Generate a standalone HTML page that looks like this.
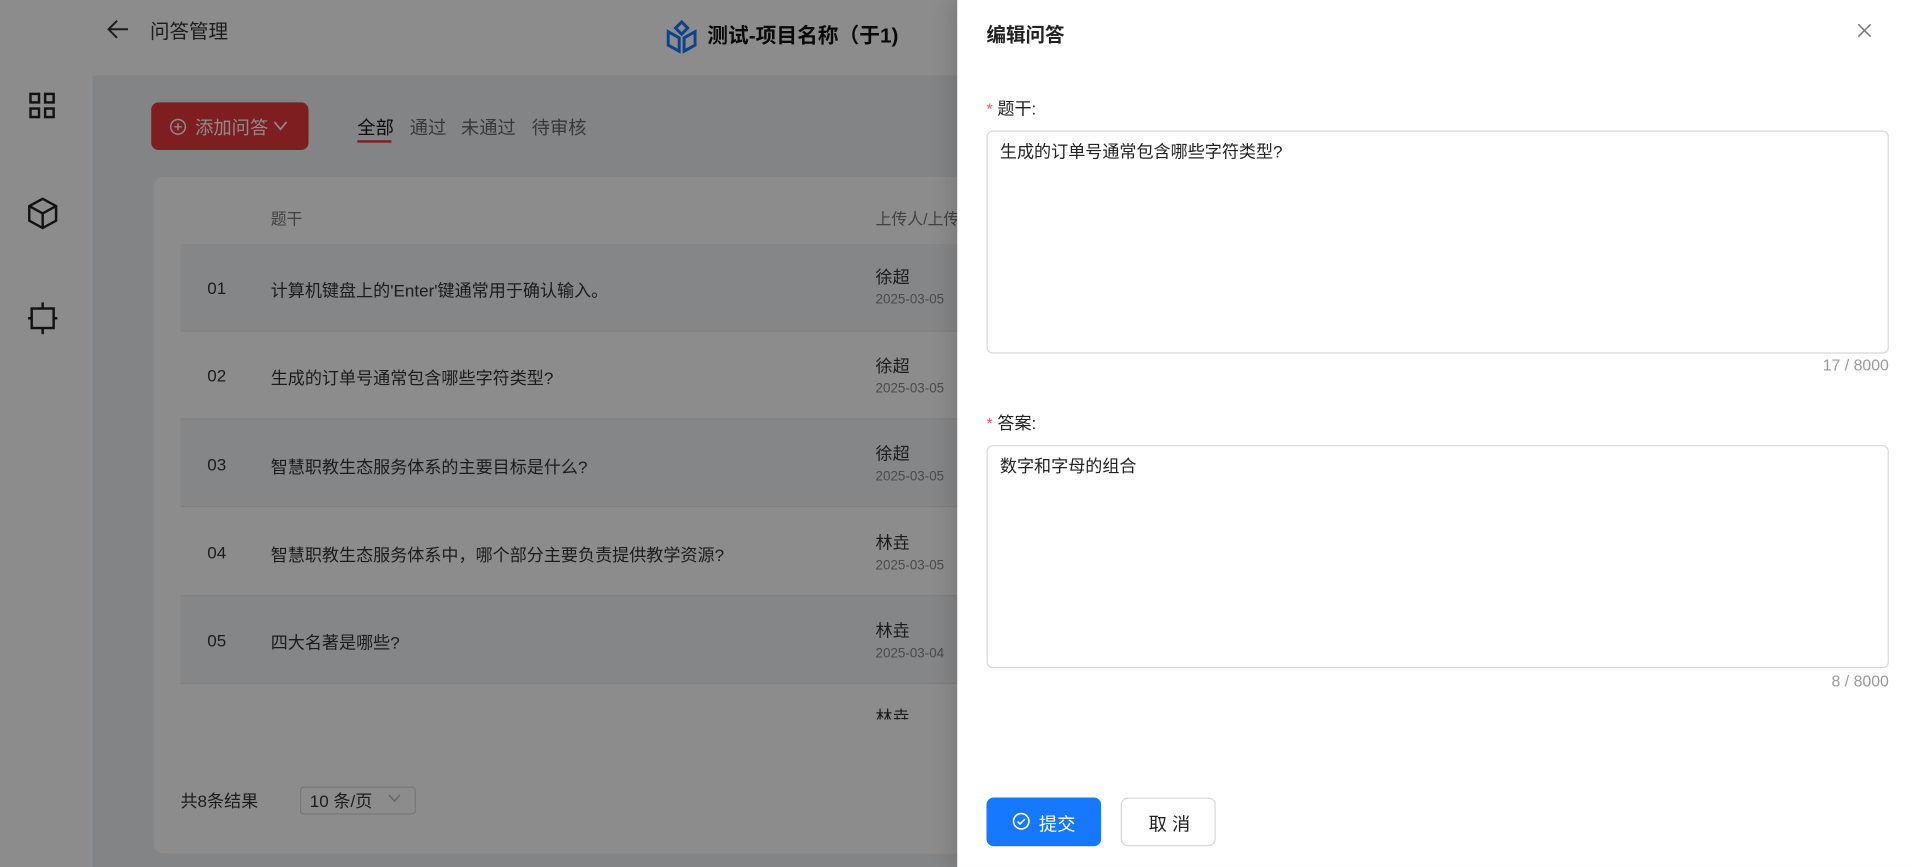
<!DOCTYPE html>
<html><head><meta charset="utf-8"><style>
*{box-sizing:border-box;margin:0;padding:0}
html,body{width:1912px;height:867px;overflow:hidden;background:#fff}
body{font-family:"Liberation Sans","Noto Sans CJK SC",sans-serif;color:#333}
#s{position:absolute;left:0;top:0;width:1568px;height:711px;transform:scale(1.2194);transform-origin:0 0}
.a{position:absolute}
.t{position:absolute;white-space:nowrap}
</style></head><body><div id="s">
<div class="a" style="left:0;top:0;width:76px;height:711px;background:#fff"></div>
<div class="a" style="left:76px;top:0;width:1492px;height:711px;background:#eef0f4"></div>
<div class="a" style="left:76px;top:0;width:1492px;height:62px;background:#fff"></div>
<svg class="a" style="left:86px;top:13px" width="22" height="22" viewBox="0 0 22 22" fill="none" stroke="#333" stroke-width="1.6"><path d="M19 11H3M10 4l-7 7 7 7"/></svg>
<div class="t" style="left:123px;top:12px;font-size:16px;color:#333">问答管理</div>
<svg class="a" style="left:546px;top:16px" width="26" height="28" viewBox="0 0 26 28" fill="none" stroke="#1677ff" stroke-width="2.4"><path d="M13 2l5 5-5 5-5-5z"/><path d="M2 10l9 5v11l-9-5z"/><path d="M24 10l-9 5v11l9-5z"/></svg>
<div class="t" style="left:580px;top:15px;font-size:17px;font-weight:bold;color:#111">测试-项目名称（于1)</div>
<svg class="a" style="left:23px;top:75px" width="24" height="24" viewBox="0 0 24 24" fill="none" stroke="#222" stroke-width="2"><rect x="2" y="2" width="7" height="7"/><rect x="14" y="2" width="7" height="7"/><rect x="2" y="14" width="7" height="7"/><rect x="14" y="14" width="7" height="7"/></svg>
<svg class="a" style="left:22px;top:161px" width="26" height="28" viewBox="0 0 26 28" fill="none" stroke="#222" stroke-width="2"><path d="M13 2l11 6v12l-11 6-11-6V8z"/><path d="M2 8l11 6 11-6M13 14v12"/></svg>
<svg class="a" style="left:22px;top:247px" width="26" height="28" viewBox="0 0 26 28" fill="none" stroke="#222" stroke-width="2"><rect x="4" y="6" width="18" height="16"/><path d="M13 1v5M13 22v5M1 14h3M22 14h3"/></svg>
<div class="a" style="left:124px;top:84px;width:129px;height:39px;background:#e8383d;border-radius:6px"></div>
<svg class="a" style="left:139px;top:97px" width="14" height="14" viewBox="0 0 14 14" fill="none" stroke="#fff" stroke-width="1.2"><circle cx="7" cy="7" r="6"/><path d="M7 4v6M4 7h6"/></svg>
<div class="t" style="left:160px;top:94px;font-size:15px;color:#fff">添加问答</div>
<svg class="a" style="left:224px;top:98px" width="12" height="10" viewBox="0 0 12 10" fill="none" stroke="#fff" stroke-width="1.4"><path d="M1 2l5 6 5-6"/></svg>
<div class="t" style="left:293px;top:94px;font-size:15px;color:#111">全部</div>
<div class="a" style="left:293px;top:115px;width:28px;height:2px;background:#e8383d"></div>
<div class="t" style="left:336px;top:94px;font-size:15px;color:#666">通过</div>
<div class="t" style="left:378px;top:94px;font-size:15px;color:#666">未通过</div>
<div class="t" style="left:436px;top:94px;font-size:15px;color:#666">待审核</div>
<div class="a" style="left:126px;top:145px;width:700px;height:555px;background:#fff;border-radius:8px"></div>
<div class="t" style="left:222px;top:169px;font-size:13px;color:#777">题干</div>
<div class="t" style="left:718px;top:169px;font-size:13px;color:#777">上传人/上传</div>
<div class="a" style="left:148px;top:200px;width:680px;height:72px;background:#f3f4f7;border-bottom:1px solid #e8e8e8"></div>
<div class="a" style="left:148px;top:272px;width:680px;height:72px;background:#fff;border-bottom:1px solid #e8e8e8"></div>
<div class="a" style="left:148px;top:344px;width:680px;height:72px;background:#f3f4f7;border-bottom:1px solid #e8e8e8"></div>
<div class="a" style="left:148px;top:416px;width:680px;height:73px;background:#fff;border-bottom:1px solid #e8e8e8"></div>
<div class="a" style="left:148px;top:489px;width:680px;height:72px;background:#f3f4f7;border-bottom:1px solid #e8e8e8"></div>
<div style="font-size:14px;color:#333">
<div class="t" style="left:170px;top:228px">01</div><div class="t" style="left:222px;top:228px">计算机键盘上的'Enter'键通常用于确认输入。</div>
<div class="t" style="left:170px;top:300px">02</div><div class="t" style="left:222px;top:300px">生成的订单号通常包含哪些字符类型?</div>
<div class="t" style="left:170px;top:373px">03</div><div class="t" style="left:222px;top:373px">智慧职教生态服务体系的主要目标是什么?</div>
<div class="t" style="left:170px;top:445px">04</div><div class="t" style="left:222px;top:445px">智慧职教生态服务体系中，哪个部分主要负责提供教学资源?</div>
<div class="t" style="left:170px;top:517px">05</div><div class="t" style="left:222px;top:517px">四大名著是哪些?</div>
<div class="t" style="left:718px;top:217px">徐超</div><div class="t" style="left:718px;top:290px">徐超</div><div class="t" style="left:718px;top:362px">徐超</div><div class="t" style="left:718px;top:435px">林垚</div><div class="t" style="left:718px;top:507px">林垚</div>
</div>
<div style="font-size:11px;color:#888">
<div class="t" style="left:718px;top:240px">2025-03-05</div><div class="t" style="left:718px;top:313px">2025-03-05</div><div class="t" style="left:718px;top:385px">2025-03-05</div><div class="t" style="left:718px;top:458px">2025-03-05</div><div class="t" style="left:718px;top:530px">2025-03-04</div>
</div>
<div class="a" style="left:718px;top:578px;width:40px;height:12px;overflow:hidden"><div class="t" style="left:0;top:0;font-size:14px">林垚</div></div>
<div class="t" style="left:148px;top:647px;font-size:14px;color:#333">共8条结果</div>
<div class="a" style="left:246px;top:645px;width:95px;height:23px;border:1px solid #d9d9d9;border-radius:3px"></div>
<div class="t" style="left:254px;top:647px;font-size:14px;color:#333">10 条/页</div>
<svg class="a" style="left:318px;top:651px" width="11" height="8" viewBox="0 0 11 8" fill="none" stroke="#bbb" stroke-width="1.2"><path d="M1 1l4.5 5 4.5-5"/></svg>
<div class="a" style="left:0;top:0;width:1568px;height:711px;background:rgba(0,0,0,0.45)"></div>
<div class="a" style="left:785px;top:0;width:783px;height:711px;background:#fff;box-shadow:-6px 0 16px rgba(0,0,0,0.12)"></div>
<div class="t" style="left:809px;top:15px;font-size:16px;font-weight:bold;color:#222">编辑问答</div>
<svg class="a" style="left:1523px;top:19px" width="12" height="12" viewBox="0 0 13 13" stroke="#777" stroke-width="1.3"><path d="M1 1l11 11M12 1L1 12"/></svg>
<div class="t" style="left:809px;top:79px;font-size:14px;color:#222"><span style="color:#ff4d4f;font-size:13px">*</span> 题干:</div>
<div class="a" style="left:809px;top:107px;width:740px;height:183px;border:1px solid #d9d9d9;border-radius:5px"></div>
<div class="t" style="left:820px;top:114px;font-size:14px;color:#222">生成的订单号通常包含哪些字符类型?</div>
<div class="t" style="right:19px;top:292px;font-size:13px;color:#999">17 / 8000</div>
<div class="t" style="left:809px;top:337px;font-size:14px;color:#222"><span style="color:#ff4d4f;font-size:13px">*</span> 答案:</div>
<div class="a" style="left:809px;top:365px;width:740px;height:183px;border:1px solid #d9d9d9;border-radius:5px"></div>
<div class="t" style="left:820px;top:372px;font-size:14px;color:#222">数字和字母的组合</div>
<div class="t" style="right:19px;top:551px;font-size:13px;color:#999">8 / 8000</div>
<div class="a" style="left:809px;top:654px;width:94px;height:40px;background:#1677ff;border-radius:6px"></div>
<svg class="a" style="left:830px;top:666px" width="15" height="15" viewBox="0 0 15 15" fill="none" stroke="#fff" stroke-width="1.3"><circle cx="7.5" cy="7.5" r="6.3"/><path d="M4.5 7.7l2 2 4-4"/></svg>
<div class="t" style="left:852px;top:665px;font-size:15px;color:#fff">提交</div>
<div class="a" style="left:919px;top:654px;width:78px;height:40px;border:1px solid #d9d9d9;border-radius:6px;background:#fff"></div>
<div class="t" style="left:942px;top:665px;font-size:15px;color:#222">取 消</div>
</div></body></html>
